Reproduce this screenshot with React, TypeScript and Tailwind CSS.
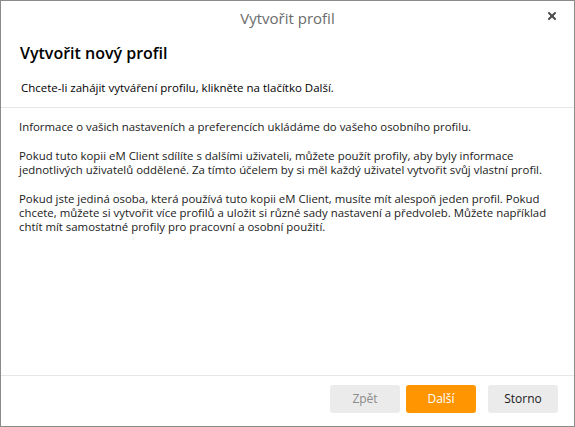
import { X } from 'lucide-react';

const font = { fontFamily: '"Segoe UI", "Open Sans", "Noto Sans", sans-serif' };

export default function App() {
  return (
    <div
      className="w-[575px] h-[427px] bg-white border border-[#8a8a8a] flex flex-col text-[#1a1a1a]"
      style={font}
    >
      {/* title bar */}
      <div className="h-[34px] flex items-center justify-center relative shrink-0">
        <span className="text-[15px] text-[#6b6b6b]">Vytvořit profil</span>
        <button className="absolute right-[16px] top-[9px] text-[#4a4a4a]" aria-label="Zavřít">
          <X className="w-[12px] h-[12px]" strokeWidth={4} />
        </button>
      </div>

      {/* header */}
      <div className="px-[19px] pt-[7px] h-[73px] border-b border-[#e6e6e6] shrink-0">
        <h1 className="text-[16px] font-semibold leading-[22px] text-black">Vytvořit nový profil</h1>
        <p className="text-[11.5px] leading-[14px] mt-[17px] pl-[1px] text-black">
          Chcete-li zahájit vytváření profilu, klikněte na tlačítko Další.
        </p>
      </div>

      {/* body */}
      <div className="flex-1 px-[18px] pt-[12px] text-[11.4px] leading-[14px] flex flex-col gap-[15px]">
        <p>Informace o vašich nastaveních a preferencích ukládáme do vašeho osobního profilu.</p>
        <p>
          Pokud tuto kopii eM Client sdílíte s dalšími uživateli, můžete použít profily, aby byly informace
          jednotlivých uživatelů oddělené. Za tímto účelem by si měl každý uživatel vytvořit svůj vlastní profil.
        </p>
        <p>
          Pokud jste jediná osoba, která používá tuto kopii eM Client, musíte mít alespoň jeden profil. Pokud
          chcete, můžete si vytvořit více profilů a uložit si různé sady nastavení a předvoleb. Můžete například
          chtít mít samostatné profily pro pracovní a osobní použití.
        </p>
      </div>

      {/* footer */}
      <div className="h-[51px] border-t border-[#e6e6e6] flex items-start justify-end pt-[9px] pr-[16px] shrink-0">
        <button className="w-[70px] h-[28px] rounded-[3px] bg-[#ebebeb] text-[#8a8a8a] text-[12px]">Zpět</button>
        <button className="w-[70px] h-[28px] rounded-[3px] bg-[#ff9500] text-white text-[12px] ml-[6px]">Další</button>
        <button className="w-[70px] h-[28px] rounded-[3px] bg-[#ebebeb] text-[#1a1a1a] text-[12px] ml-[12px]">Storno</button>
      </div>
    </div>
  );
}
